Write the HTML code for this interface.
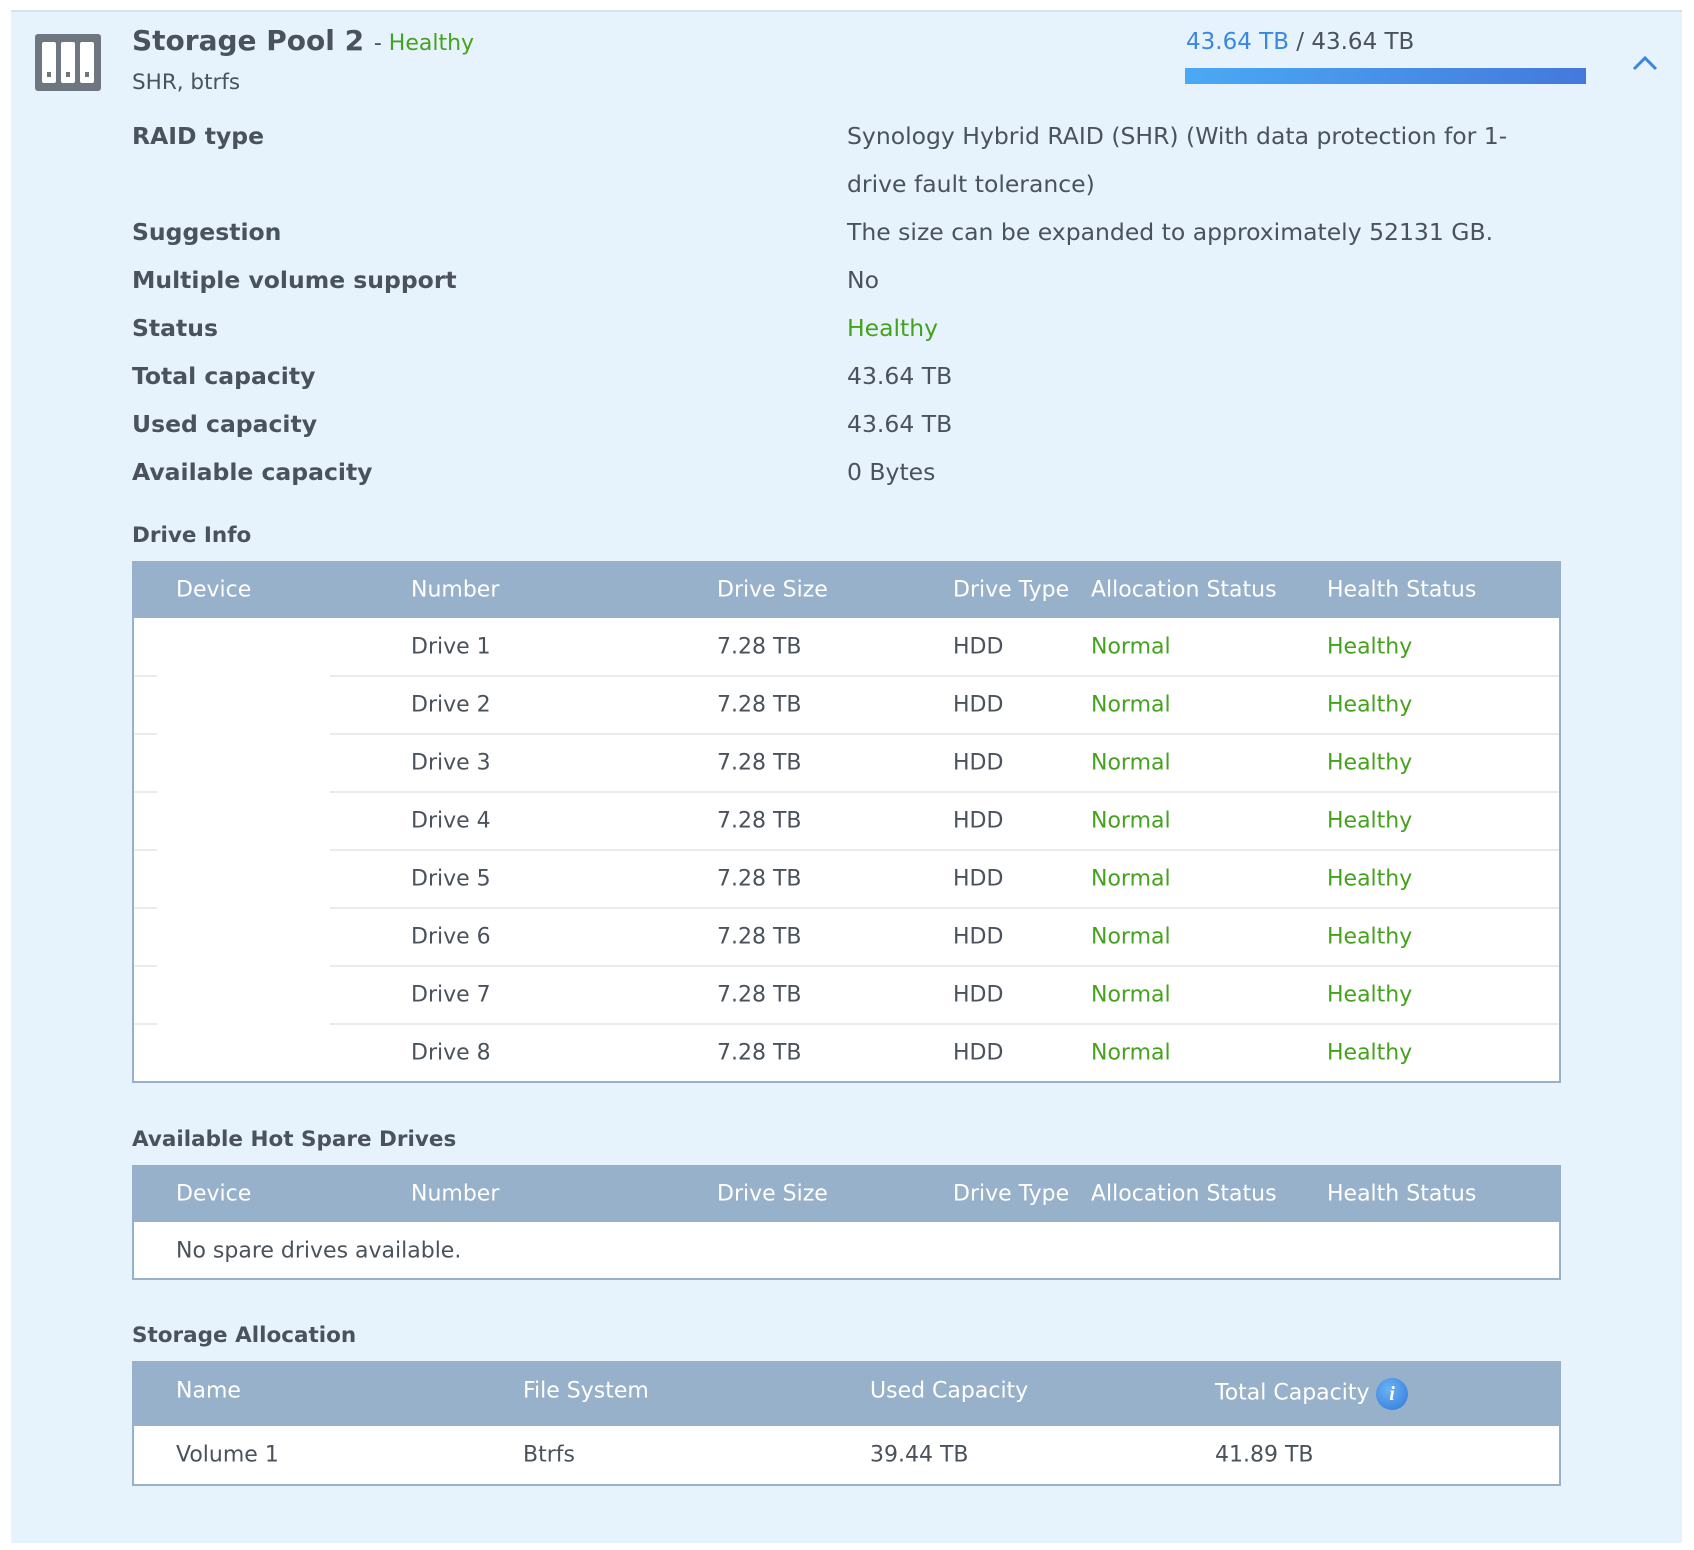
<!DOCTYPE html>
<html><head><meta charset="utf-8"><style>
*{margin:0;padding:0;box-sizing:border-box}
body{width:1694px;height:1550px;background:#fff;position:relative;font-family:"DejaVu Sans","Liberation Sans",sans-serif;color:#4a525c;overflow:hidden}
.a{position:absolute;white-space:nowrap}
.panel{position:absolute;left:11px;top:10px;width:1671px;height:1533px;background:#e6f3fd;border-top:2px solid #d6e2ee}
.g{color:#45a21d}
.lab{font-weight:bold;font-size:23.5px;left:132px}
.val{font-size:23.5px;left:847px}
.sec{font-weight:bold;font-size:21.5px;left:132px}
.tbl{position:absolute;left:132px;width:1429px;background:#fff;border:2px solid #98b1cb;border-top:none}
.hd{position:absolute;left:0;right:0;top:0;background:#98b1cb;color:#fff}
.t{position:absolute;font-size:22px;white-space:nowrap;transform:translateY(-50%)}
.sep{position:absolute;height:2px;background:#e7ecf1}
</style></head><body>
<div class="panel"></div>
<svg class="a" style="left:35px;top:34px" width="66" height="57" viewBox="0 0 66 57">
<rect x="0" y="0" width="66" height="57" rx="3" fill="#6e7680"/>
<rect x="7" y="8" width="14" height="41" rx="2" fill="#fff"/>
<rect x="26" y="8" width="14" height="41" rx="2" fill="#fff"/>
<rect x="45" y="8" width="14" height="41" rx="2" fill="#fff"/>
<rect x="12" y="38" width="4" height="5" fill="#6e7680"/>
<rect x="31" y="38" width="4" height="5" fill="#6e7680"/>
<rect x="50" y="38" width="4" height="5" fill="#6e7680"/>
</svg>
<div class="a" style="left:132px;top:24px;font-size:28px;font-weight:bold">Storage Pool 2 <span style="font-weight:normal;font-size:22px">- <span class="g">Healthy</span></span></div>
<div class="a" style="left:132px;top:70px;font-size:21.5px">SHR, btrfs</div>
<div class="a" style="left:1186px;top:29px;font-size:23px"><span style="color:#3b87e0">43.64 TB</span> / 43.64 TB</div>
<div class="a" style="left:1185px;top:68px;width:401px;height:16px;background:linear-gradient(90deg,#4aa9f5,#4479db)"></div>
<svg class="a" style="left:1631px;top:54px" width="28" height="18" viewBox="0 0 28 18"><path d="M3 15 L14 4 L25 15" fill="none" stroke="#3b87e0" stroke-width="3"/></svg>

<div class="a lab" style="top:122px">RAID type</div>
<div class="a val" style="top:122px">Synology Hybrid RAID (SHR) (With data protection for 1-</div>
<div class="a val" style="top:170px">drive fault tolerance)</div>
<div class="a lab" style="top:218px">Suggestion</div>
<div class="a val" style="top:218px">The size can be expanded to approximately 52131 GB.</div>
<div class="a lab" style="top:266px">Multiple volume support</div>
<div class="a val" style="top:266px">No</div>
<div class="a lab" style="top:314px">Status</div>
<div class="a val g" style="top:314px">Healthy</div>
<div class="a lab" style="top:362px">Total capacity</div>
<div class="a val" style="top:362px">43.64 TB</div>
<div class="a lab" style="top:410px">Used capacity</div>
<div class="a val" style="top:410px">43.64 TB</div>
<div class="a lab" style="top:458px">Available capacity</div>
<div class="a val" style="top:458px">0 Bytes</div>

<div class="a sec" style="top:523px">Drive Info</div>
<div class="tbl" style="top:561px;height:522px">
<div class="hd" style="height:57px">
<div class="t" style="left:42px;top:29px">Device</div><div class="t" style="left:277px;top:29px">Number</div><div class="t" style="left:583px;top:29px">Drive Size</div><div class="t" style="left:819px;top:29px">Drive Type</div><div class="t" style="left:957px;top:29px">Allocation Status</div><div class="t" style="left:1193px;top:29px">Health Status</div>
</div>
<div id="rows"></div>
</div>
<script>
var h='';for(var i=0;i<8;i++){var c=57+i*58+29;h+='<div class="t" style="left:277px;top:'+c+'px">Drive '+(i+1)+'</div><div class="t" style="left:583px;top:'+c+'px">7.28 TB</div><div class="t" style="left:819px;top:'+c+'px">HDD</div><div class="t g" style="left:957px;top:'+c+'px">Normal</div><div class="t g" style="left:1193px;top:'+c+'px">Healthy</div>';if(i<7){var s=57+(i+1)*58-1;h+='<div class="sep" style="left:0;width:23px;top:'+s+'px"></div><div class="sep" style="left:196px;right:0;top:'+s+'px"></div>';}}
document.getElementById('rows').innerHTML=h;
</script>

<div class="a sec" style="top:1127px">Available Hot Spare Drives</div>
<div class="tbl" style="top:1165px;height:115px">
<div class="hd" style="height:57px">
<div class="t" style="left:42px;top:29px">Device</div><div class="t" style="left:277px;top:29px">Number</div><div class="t" style="left:583px;top:29px">Drive Size</div><div class="t" style="left:819px;top:29px">Drive Type</div><div class="t" style="left:957px;top:29px">Allocation Status</div><div class="t" style="left:1193px;top:29px">Health Status</div>
</div>
<div class="t" style="left:42px;top:86px">No spare drives available.</div>
</div>

<div class="a sec" style="top:1323px">Storage Allocation</div>
<div class="tbl" style="top:1361px;height:125px">
<div class="hd" style="height:65px">
<div class="t" style="left:42px;top:30px">Name</div><div class="t" style="left:389px;top:30px">File System</div><div class="t" style="left:736px;top:30px">Used Capacity</div><div class="t" style="left:1081px;top:32px">Total Capacity</div>
<div style="position:absolute;left:1242px;top:17px;width:32px;height:32px;border-radius:50%;background:radial-gradient(circle at 40% 35%,#6cb2f5,#2f78d8);color:#fff;font:italic bold 20px 'Liberation Serif',serif;text-align:center;line-height:32px">i</div>
</div>
<div class="t" style="left:42px;top:94px">Volume 1</div><div class="t" style="left:389px;top:94px">Btrfs</div><div class="t" style="left:736px;top:94px">39.44 TB</div><div class="t" style="left:1081px;top:94px">41.89 TB</div>
</div>
</body></html>
